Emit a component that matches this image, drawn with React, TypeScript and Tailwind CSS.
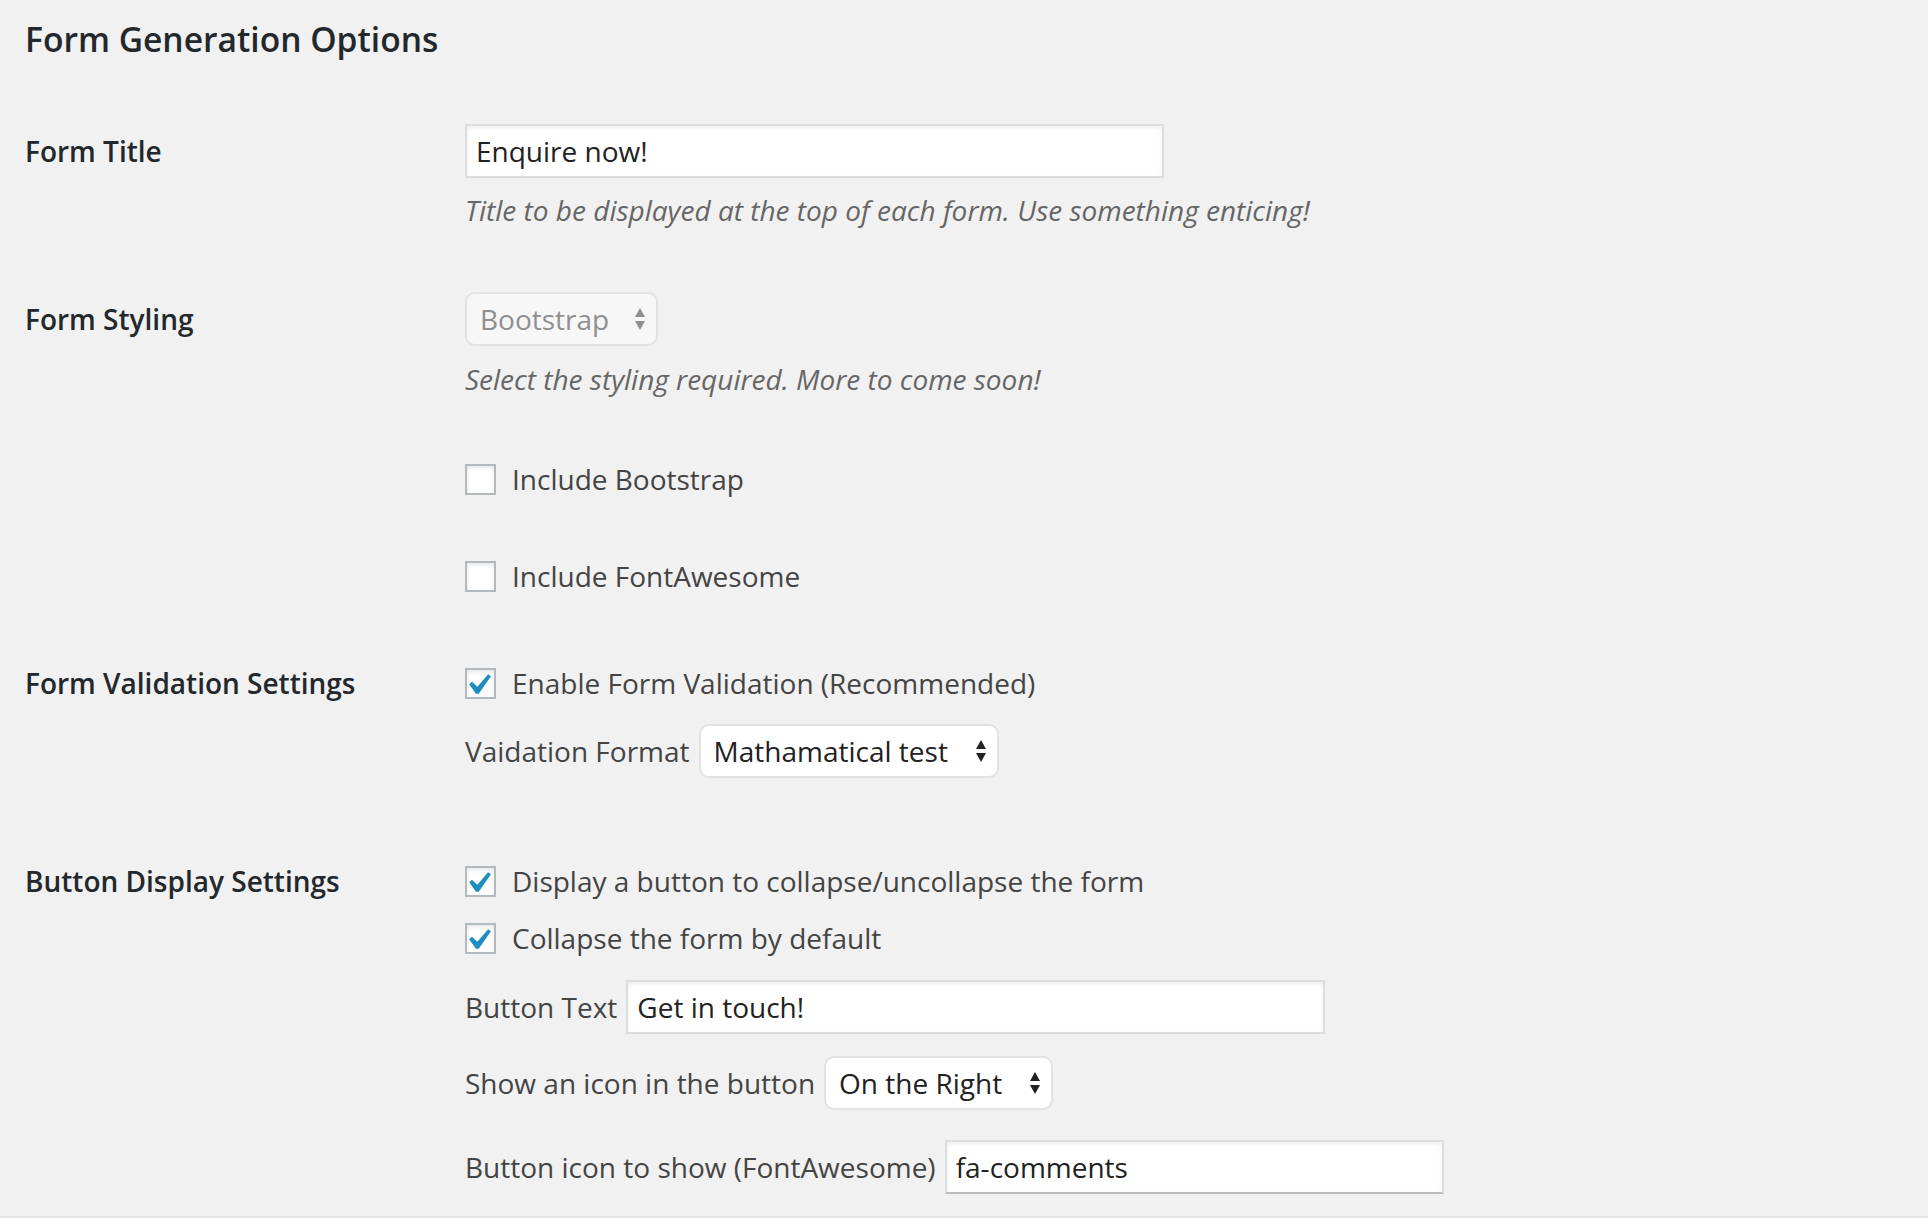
import React from 'react'

const font = { fontFamily: '"Open Sans", "Noto Sans", sans-serif' }

function Check() {
  return (
    <svg viewBox="0 0 20 20" className="absolute left-[-10px] top-[-6px] w-[42px] h-[42px]" fill="#1e8cbe">
      <path d="M14.83 4.89l1.34.94-5.81 8.38H9.02L5.78 9.67l1.34-1.25 2.57 2.4z" />
    </svg>
  )
}

function Checkbox({ label, checked }: { label: string; checked?: boolean }) {
  return (
    <label className="flex items-center h-[40px] text-[28px] text-[#444]">
      <span className="relative w-[31px] h-[31px] bg-white border-2 border-[#b4b9be] shadow-[inset_0_2px_4px_rgba(0,0,0,0.1)] mr-[16px] shrink-0">
        {checked && <Check />}
      </span>
      {label}
    </label>
  )
}

function Arrows({ muted }: { muted?: boolean }) {
  return (
    <svg viewBox="0 0 12 24" className="w-[12px] h-[24px]" fill={muted ? '#8f8f8f' : '#222'}>
      <path d="M6 1 L11 10 H1 Z" />
      <path d="M1 14 H11 L6 23 Z" />
    </svg>
  )
}

function Select({ value, width, muted }: { value: string; width: string; muted?: boolean }) {
  return (
    <div
      className={`flex items-center justify-between h-[54px] rounded-[10px] border-2 border-[#e2e2e2] pl-[13px] pr-[10px] text-[28px] ${width} ${
        muted ? 'bg-[#f7f7f7] text-[#8f8f8f]' : 'bg-white text-[#222]'
      }`}
    >
      <span>{value}</span>
      <Arrows muted={muted} />
    </div>
  )
}

function TextInput({ value, width, darkBottom }: { value: string; width: string; darkBottom?: boolean }) {
  return (
    <div
      className={`flex items-center h-[54px] bg-white border-2 border-[#ddd] shadow-[inset_0_2px_4px_rgba(0,0,0,0.07)] px-[9px] text-[28px] text-[#222] ${width} ${
        darkBottom ? 'border-b-[#bbb]' : ''
      }`}
    >
      {value}
    </div>
  )
}

function Row({ label, lh, children, className }: { label: string; lh: string; children: React.ReactNode; className?: string }) {
  return (
    <div className={`flex ${className ?? ''}`}>
      <div className={`w-[440px] shrink-0 text-[28px] font-semibold text-[#23282d] ${lh}`}>{label}</div>
      <div className="flex flex-col">{children}</div>
    </div>
  )
}

export default function App() {
  return (
    <div className="min-h-screen bg-[#f1f1f1] pl-[25px] pt-[17px] border-b-2 border-[#e5e5e5]" style={font}>
      <h2 className="text-[33.6px] leading-[44px] font-semibold text-[#23282d]">Form Generation Options</h2>

      <Row label="Form Title" lh="leading-[54px]" className="mt-[63px]">
        <TextInput value="Enquire now!" width="w-[699px]" />
        <p className="mt-[12px] text-[28px] leading-[40px] italic text-[#666]">
          Title to be displayed at the top of each form. Use something enticing!
        </p>
      </Row>

      <Row label="Form Styling" lh="leading-[54px]" className="mt-[62px]">
        <Select value="Bootstrap" width="w-[193px]" muted />
        <p className="mt-[13px] text-[28px] leading-[40px] italic text-[#666]">
          Select the styling required. More to come soon!
        </p>
        <div className="mt-[60px]">
          <Checkbox label="Include Bootstrap" />
        </div>
        <div className="mt-[57px]">
          <Checkbox label="Include FontAwesome" />
        </div>
      </Row>

      <Row label="Form Validation Settings" lh="leading-[40px]" className="mt-[67px]">
        <Checkbox label="Enable Form Validation (Recommended)" checked />
        <div className="mt-[21px] flex items-center gap-[9px] text-[28px] text-[#444]">
          <span>Vaidation Format</span>
          <Select value="Mathamatical test" width="w-[300px]" />
        </div>
      </Row>

      <Row label="Button Display Settings" lh="leading-[40px]" className="mt-[83px]">
        <Checkbox label="Display a button to collapse/uncollapse the form" checked />
        <div className="mt-[17px]">
          <Checkbox label="Collapse the form by default" checked />
        </div>
        <div className="mt-[22px] flex items-center gap-[9px] text-[28px] text-[#444]">
          <span>Button Text</span>
          <TextInput value="Get in touch!" width="w-[699px]" />
        </div>
        <div className="mt-[22px] flex items-center gap-[9px] text-[28px] text-[#444]">
          <span>Show an icon in the button</span>
          <Select value="On the Right" width="w-[229px]" />
        </div>
        <div className="mt-[30px] flex items-center gap-[9px] text-[28px] text-[#444]">
          <span>Button icon to show (FontAwesome)</span>
          <TextInput value="fa-comments" width="w-[499px]" darkBottom />
        </div>
      </Row>
    </div>
  )
}
